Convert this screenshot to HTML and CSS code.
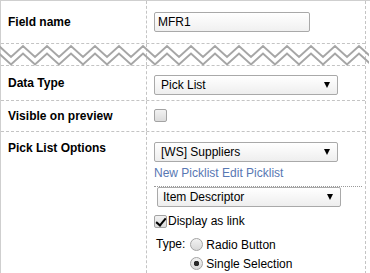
FILE: index.html
```html
<!DOCTYPE html>
<html>
<head>
<meta charset="utf-8">
<link rel="stylesheet" href="styles.css">
</head>
<body>
<div class="panel">
  <div class="form">
    <div class="row r-name">
      <div class="label">Field name</div>
      <div class="value"><input class="text" type="text" value="MFR1"></div>
    </div>
    <div class="row r-break">
      <div class="label"></div>
      <div class="value"></div>
      <svg class="zigzag" width="369" height="23" viewBox="0 0 369 23">
        <path d="M-1 3 l12 11 12 -11 12 11 12 -11 12 11 12 -11 12 11 12 -11 12 11 12 -11 12 11 12 -11 12 11 12 -11 12 11 12 -11 12 11 12 -11 12 11 12 -11 12 11 12 -11 12 11 12 -11 12 11 12 -11 12 11 12 -11 12 11 12 -11 12 11 12 -11 12 11 12 -11" />
        <path d="M-1 10.5 l12 11 12 -11 12 11 12 -11 12 11 12 -11 12 11 12 -11 12 11 12 -11 12 11 12 -11 12 11 12 -11 12 11 12 -11 12 11 12 -11 12 11 12 -11 12 11 12 -11 12 11 12 -11 12 11 12 -11 12 11 12 -11 12 11 12 -11 12 11 12 -11" />
      </svg>
    </div>
    <div class="row r-type">
      <div class="label">Data Type</div>
      <div class="value">
        <span class="sel"><select><option>Pick List</option></select></span>
      </div>
    </div>
    <div class="row r-visible">
      <div class="label">Visible on preview</div>
      <div class="value"><input class="cb" type="checkbox"></div>
    </div>
    <div class="row r-pick">
      <div class="label top">Pick List Options</div>
      <div class="value">
        <span class="sel"><select><option>[WS] Suppliers</option></select></span>
        <div class="links"><a href="#">New Picklist</a> <a href="#">Edit Picklist</a></div>
        <div class="sub">
          <span class="sel sel-sub"><select><option>Item Descriptor</option></select></span>
          <label class="check-row"><input class="cb" type="checkbox" checked><span>Display as link</span></label>
          <div class="type-row">
            <span class="type-label">Type:</span>
            <div class="options">
              <label class="opt"><input class="rd" type="radio" name="t"><span>Radio Button</span></label>
              <label class="opt"><input class="rd" type="radio" name="t" checked><span>Single Selection</span></label>
            </div>
          </div>
        </div>
      </div>
    </div>
  </div>
</div>
</body>
</html>
```

FILE: styles.css
```css
* { box-sizing: border-box; }
html, body { margin: 0; padding: 0; background: #fff; }
body {
  font-family: "Liberation Sans", Arial, sans-serif;
  font-size: 12px;
  color: #000;
}
.panel {
  width: 370px;
  border-top: 1px solid #cfcfcf;
  border-left: 1px solid #cfcfcf;
}
.form {
  width: 365px;
  border-right: 1px dashed #c4c4c4;
}
.row {
  display: grid;
  grid-template-columns: 146px 1fr;
  border-bottom: 1px dashed #c4c4c4;
}
.label {
  font-weight: bold;
  line-height: 15px;
  padding: 0 7px;
  display: flex;
  align-items: center;
  border-right: 1px dashed #c4c4c4;
}
.label.top { align-items: flex-start; padding-top: 9px; }
.value { padding: 0 3px 0 7px; }

.r-name .value { padding-top: 11px; padding-bottom: 11px; }
.r-break { position: relative; height: 22px; }
.zigzag {
  position: absolute;
  left: -1px;
  top: -1px;
  fill: none;
  stroke: #a6a6a6;
  stroke-width: 2;
}
.r-type .value { padding-top: 9px; padding-bottom: 5px; }
.r-visible .value { padding-top: 8px; padding-bottom: 9px; }
.r-pick .value { padding-top: 10px; padding-bottom: 10px; }

.text {
  display: block;
  width: 156px;
  height: 20px;
  margin: 0;
  padding: 0 3px;
  border: 1px solid #a9a9a9;
  border-radius: 2px;
  background: linear-gradient(#ffffff, #f0f0f0);
  font: 12px "Liberation Sans", Arial, sans-serif;
  color: #000;
  outline: none;
}

.sel { position: relative; display: block; width: 184px; }
.sel::after {
  content: "";
  position: absolute;
  right: 8px;
  top: 7px;
  border-left: 3.5px solid transparent;
  border-right: 3.5px solid transparent;
  border-top: 6px solid #000;
  pointer-events: none;
}
.sel select {
  -webkit-appearance: none;
  appearance: none;
  display: block;
  width: 184px;
  height: 20px;
  margin: 0;
  padding: 0 0 0 6px;
  border: 1px solid #a9a9a9;
  border-radius: 2px;
  background: linear-gradient(#ffffff, #eeeeee);
  font: 12px "Liberation Sans", Arial, sans-serif;
  color: #000;
  outline: none;
}
.sel-sub { margin-left: 3px; }
.sel-sub select { padding-left: 5px; }

.links {
  margin-top: 4px;
  line-height: 14px;
}
.links a { color: #5877b3; text-decoration: none; }

.sub {
  margin-top: 6px;
  border-top: 1px dotted #9a9a9a;
}

.cb {
  -webkit-appearance: none;
  appearance: none;
  display: block;
  width: 13px;
  height: 13px;
  margin: 0;
  border: 1px solid #a3a3a3;
  border-radius: 2px;
  background: linear-gradient(#f2f2f2, #dcdcdc);
  position: relative;
}
.cb:checked::after {
  content: "";
  position: absolute;
  left: 3px;
  top: 0px;
  width: 4px;
  height: 8px;
  border-right: 2px solid #000;
  border-bottom: 2px solid #000;
  transform: rotate(40deg);
}
.check-row {
  display: flex;
  align-items: center;
  gap: 1px;
  margin-top: 7px;
  line-height: 14px;
}
.type-row {
  display: flex;
  margin-top: 7px;
}
.type-label {
  margin-left: 2px;
  line-height: 19px;
}
.options {
  display: flex;
  flex-direction: column;
  margin-left: 5px;
}
.opt {
  display: flex;
  align-items: center;
  gap: 3px;
  height: 19px;
}
.rd {
  -webkit-appearance: none;
  appearance: none;
  display: block;
  width: 13px;
  height: 13px;
  margin: 0;
  border: 1px solid #a3a3a3;
  border-radius: 50%;
  background: linear-gradient(#f2f2f2, #d8d8d8);
}
.rd:checked {
  background: radial-gradient(circle, #2a2a2a 0 2.5px, transparent 3px), linear-gradient(#f2f2f2, #d8d8d8);
}
```
